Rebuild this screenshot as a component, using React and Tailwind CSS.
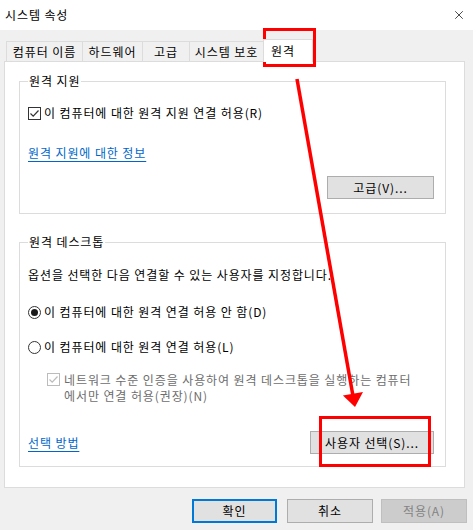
import { X } from "lucide-react";

const tabs = [
  { label: "컴퓨터 이름", w: "w-[76px]" },
  { label: "하드웨어", w: "w-[60px]" },
  { label: "고급", w: "w-[47px]" },
  { label: "시스템 보호", w: "w-[74px]" },
];

function Checkbox({ disabled }) {
  return (
    <span
      className={`flex items-center justify-center w-[13px] h-[13px] border bg-white shrink-0 ${
        disabled ? "border-[#bcbcbc]" : "border-[#333333]"
      }`}
    >
      <svg width="11" height="11" viewBox="0 0 11 11">
        <path
          d="M1.5 5.5 L4.2 8.2 L9.5 2.5"
          fill="none"
          stroke={disabled ? "#bcbcbc" : "#333333"}
          strokeWidth="1.2"
        />
      </svg>
    </span>
  );
}

function Radio({ checked }) {
  return (
    <span className="flex items-center justify-center w-[13px] h-[13px] rounded-full border border-[#333333] bg-white shrink-0">
      {checked && <span className="w-[7px] h-[7px] rounded-full bg-[#1a1a1a]" />}
    </span>
  );
}

function Button({ children, className = "", disabled, focused }) {
  const look = disabled
    ? "bg-[#cccccc] border border-[#bfbfbf] text-[#838383]"
    : focused
    ? "bg-[#e1e1e1] border-2 border-[#0078d7] text-black"
    : "bg-[#e1e1e1] border border-[#adadad] text-black";
  return (
    <button
      className={`text-[12px] leading-none flex items-center justify-center ${look} ${className}`}
    >
      {children}
    </button>
  );
}

export default function App() {
  return (
    <div
      className="relative w-[473px] h-[530px] bg-[#f0f0f0] text-[12px] tracking-[0.9px] text-black overflow-hidden"
      style={{ fontFamily: '"Noto Sans CJK KR", "Noto Sans", sans-serif' }}
    >
      {/* title bar */}
      <div className="h-[30px] bg-white flex items-center justify-between pl-[5px] pr-[7px]">
        <span className="text-[12px] leading-none">시스템 속성</span>
        <X className="w-[14px] h-[14px]" strokeWidth={1.2} />
      </div>

      {/* tab strip */}
      <div className="flex items-end h-[31px] pl-[6px]">
        {tabs.map((t) => (
          <div
            key={t.label}
            className={`${t.w} h-[20px] border border-r-0 border-b-0 border-[#dcdcdc] bg-[#f0f0f0] flex items-center justify-center leading-none`}
          >
            {t.label}
          </div>
        ))}
        <div className="w-[50px] h-[23px] border border-b-0 border-[#dcdcdc] bg-white flex items-center pl-[7px] leading-none relative z-10 -mb-px">
          원격
        </div>
      </div>

      {/* tab page */}
      <div className="mx-[4px] w-[461px] border border-[#dcdcdc] bg-white px-[14px] pt-[11px] pb-[20px]">
        <fieldset className="border border-[#dcdcdc] w-[427px] px-[8px] pb-[14px]">
          <legend className="px-[1px] leading-[16px]">원격 지원</legend>
          <label className="mt-[16px] h-[16px] flex items-center gap-[3px]">
            <Checkbox />
            <span className="leading-none">이 컴퓨터에 대한 원격 지원 연결 허용(R)</span>
          </label>
          <div className="mt-[24px] h-[16px] flex items-center">
            <span className="text-[#0066cc] underline underline-offset-[3px] leading-none">
              원격 지원에 대한 정보
            </span>
          </div>
          <div className="mt-[15px] flex justify-end pr-[3px]">
            <Button className="w-[107px] h-[23px]">고급(V)...</Button>
          </div>
        </fieldset>

        <fieldset className="mt-[20px] border border-[#dcdcdc] w-[427px] px-[8px] pb-[12px]">
          <legend className="px-[1px] leading-[16px]">원격 데스크톱</legend>
          <div className="mt-[17px] h-[16px] flex items-center leading-none">
            옵션을 선택한 다음 연결할 수 있는 사용자를 지정합니다.
          </div>
          <label className="mt-[21px] h-[16px] flex items-center gap-[3px]">
            <Radio checked />
            <span className="leading-none">이 컴퓨터에 대한 원격 연결 허용 안 함(D)</span>
          </label>
          <label className="mt-[19px] h-[16px] flex items-center gap-[3px]">
            <Radio />
            <span className="leading-none">이 컴퓨터에 대한 원격 연결 허용(L)</span>
          </label>
          <label className="mt-[17px] pl-[19px] flex items-start gap-[4px] text-[#6d6d6d]">
            <span className="mt-[1px]">
              <Checkbox disabled />
            </span>
            <span className="leading-[16px]">
              네트워크 수준 인증을 사용하여 원격 데스크톱을 실행하는 컴퓨터
              <br />
              에서만 연결 허용(권장)(N)
            </span>
          </label>
          <div className="mt-[27px] flex items-center justify-between pr-[3px]">
            <span className="text-[#0066cc] underline underline-offset-[3px] leading-none">
              선택 방법
            </span>
            <Button className="w-[124px] h-[23px]">사용자 선택(S)...</Button>
          </div>
        </fieldset>
      </div>

      {/* dialog buttons */}
      <div className="mt-[11px] flex justify-end pr-[6px]">
        <Button focused className="w-[85px] h-[24px]">확인</Button>
        <Button className="ml-[10px] w-[86px] h-[24px]">취소</Button>
        <Button disabled className="ml-[8px] w-[86px] h-[24px]">
          적용(A)
        </Button>
      </div>

      {/* red callouts drawn over the dialog */}
      <svg
        className="absolute inset-0 pointer-events-none"
        width="473"
        height="530"
        viewBox="0 0 473 530"
      >
        <rect x="264.5" y="29.5" width="50" height="36" fill="none" stroke="#ff0000" strokeWidth="3" />
        <rect x="320.5" y="417.5" width="109" height="48" fill="none" stroke="#ff0000" strokeWidth="3" />
        <line x1="297" y1="79" x2="353" y2="396" stroke="#ff0000" strokeWidth="3.5" />
        <polygon points="355,407 342.9,395.5 363,392" fill="#ff0000" />
      </svg>
    </div>
  );
}
